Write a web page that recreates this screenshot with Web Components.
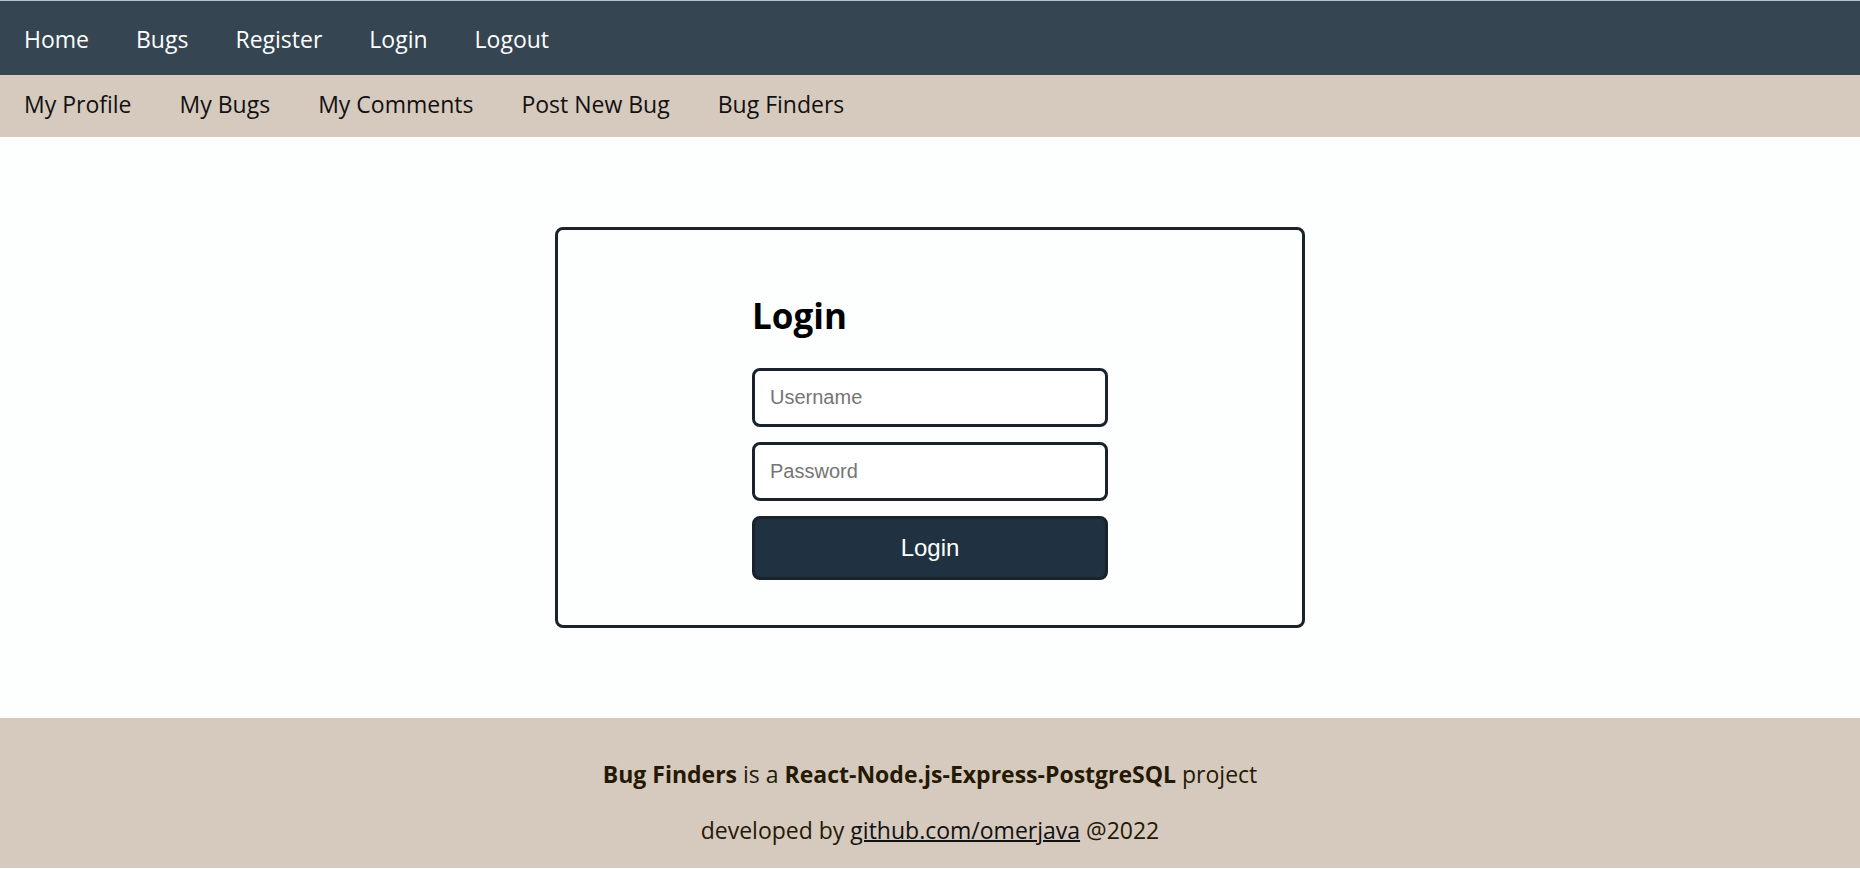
<!DOCTYPE html>
<html lang="en">
<head>
<meta charset="utf-8">
<title>Bug Finders</title>
<style>
body { margin: 0; background: #fcfffe; font-family: "Segoe UI", "Open Sans", sans-serif; font-size: 23px; line-height: 32px; }
</style>
</head>
<body>
<bug-app></bug-app>
<script>
class ShadowElement extends HTMLElement {
  constructor() {
    super();
    this.attachShadow({ mode: "open" }).innerHTML = this.constructor.markup;
  }
}

class NavLink extends ShadowElement {
  static markup = `
    <style>
      :host { display: block; }
      a { color: inherit; text-decoration: none; white-space: nowrap; }
    </style>
    <a href="#"><slot></slot></a>`;
}

class NavBar extends ShadowElement {
  static markup = `
    <style>
      :host { display: block; background: var(--bar-bg); color: var(--bar-fg); }
      nav { display: flex; flex-wrap: wrap; column-gap: var(--bar-gap); padding: var(--bar-padding); }
    </style>
    <nav><slot></slot></nav>`;
}

class LoginForm extends ShadowElement {
  static markup = `
    <style>
      :host { display: block; box-sizing: border-box; width: 100%; max-width: 750px; border: 3px solid #1a222c; border-radius: 8px; padding: 62px 24px 45px; }
      form { display: grid; gap: 15px; max-width: 356px; margin: 0 auto; }
      h1 { margin: 0; padding-bottom: 13px; font-size: 35px; line-height: 48px; font-weight: 700; color: #000; }
      label { display: grid; }
      input, button { box-sizing: border-box; width: 100%; border: 3px solid #1a222c; border-radius: 8px; font-family: Arial, "Liberation Sans", sans-serif; }
      input { height: 59px; padding: 0 15px; background: #fff; font-size: 20px; color: #1a222c; }
      input::placeholder { color: #757575; }
      button { height: 64px; background: #203241; color: #fff; font-size: 24px; }
    </style>
    <form>
      <h1>Login</h1>
      <label><input type="text" placeholder="Username" aria-label="Username"></label>
      <label><input type="password" placeholder="Password" aria-label="Password"></label>
      <button type="button">Login</button>
    </form>`;
}

class PageFooter extends ShadowElement {
  static markup = `
    <style>
      :host { display: block; background: #d6c9be; color: #241a04; text-align: center; }
      footer { display: grid; gap: 24px; padding: 40px 24px 22px; }
      p { margin: 0; }
      b { font-weight: 700; }
      a { color: #111; text-decoration-thickness: 2px; }
    </style>
    <footer>
      <p><b>Bug Finders</b> is a <b>React-Node.js-Express-PostgreSQL</b> project</p>
      <p>developed by <a href="https://github.com/omerjava">github.com/omerjava</a> @2022</p>
    </footer>`;
}

class BugApp extends ShadowElement {
  static markup = `
    <style>
      :host { display: block; }
      .top { --bar-bg: #364552; --bar-fg: #fff; --bar-gap: 47px; --bar-padding: 22px 24px 20px; border-top: 1px solid #b3c3d1; }
      .sub { --bar-bg: #d6c9be; --bar-fg: #111; --bar-gap: 48px; --bar-padding: 13px 24px 17px; }
      main { display: flex; justify-content: center; padding: 90px 24px; }
    </style>
    <nav-bar class="top">
      <nav-link>Home</nav-link><nav-link>Bugs</nav-link><nav-link>Register</nav-link><nav-link>Login</nav-link><nav-link>Logout</nav-link>
    </nav-bar>
    <nav-bar class="sub">
      <nav-link>My Profile</nav-link><nav-link>My Bugs</nav-link><nav-link>My Comments</nav-link><nav-link>Post New Bug</nav-link><nav-link>Bug Finders</nav-link>
    </nav-bar>
    <main><login-form></login-form></main>
    <page-footer></page-footer>`;
}

customElements.define("nav-link", NavLink);
customElements.define("nav-bar", NavBar);
customElements.define("login-form", LoginForm);
customElements.define("page-footer", PageFooter);
customElements.define("bug-app", BugApp);
</script>
</body>
</html>
